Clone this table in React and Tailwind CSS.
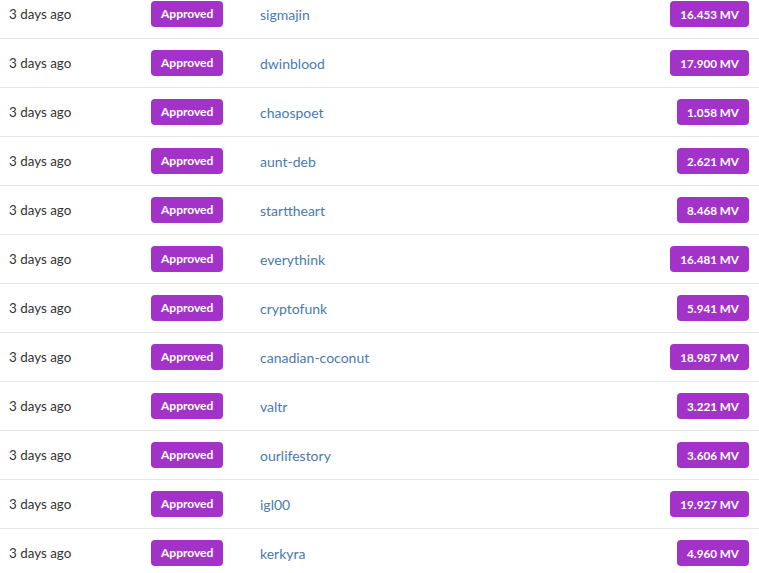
const rows = [
  ["sigmajin", "16.453"],
  ["dwinblood", "17.900"],
  ["chaospoet", "1.058"],
  ["aunt-deb", "2.621"],
  ["starttheart", "8.468"],
  ["everythink", "16.481"],
  ["cryptofunk", "5.941"],
  ["canadian-coconut", "18.987"],
  ["valtr", "3.221"],
  ["ourlifestory", "3.606"],
  ["igl00", "19.927"],
  ["kerkyra", "4.960"],
];

export default function App() {
  return (
    <div className="min-h-screen bg-white overflow-hidden font-['Lato','Liberation_Sans',sans-serif] text-[14px] text-[#333333]">
      <div className="-mt-[10px]">
        {rows.map(([user, mv]) => (
          <div
            key={user}
            className="flex items-center h-[49px] border-b border-[#e6e6e6]"
          >
            <div className="w-[151px] pl-[9px] text-[13.4px]">3 days ago</div>
            <div className="w-[109px]">
              <span className="inline-block rounded-[4px] bg-[#a333c8] px-[10px] py-[7px] text-[12px] font-bold leading-none text-white">
                Approved
              </span>
            </div>
            <div className="flex-1">
              <a href="#" className="text-[#4a7ab0]">
                {user}
              </a>
            </div>
            <div className="pr-[10px]">
              <span className="inline-block rounded-[4px] bg-[#a333c8] px-[10px] py-[7px] text-[11.7px] font-bold leading-[12px] text-white">
                {mv} MV
              </span>
            </div>
          </div>
        ))}
      </div>
    </div>
  );
}
